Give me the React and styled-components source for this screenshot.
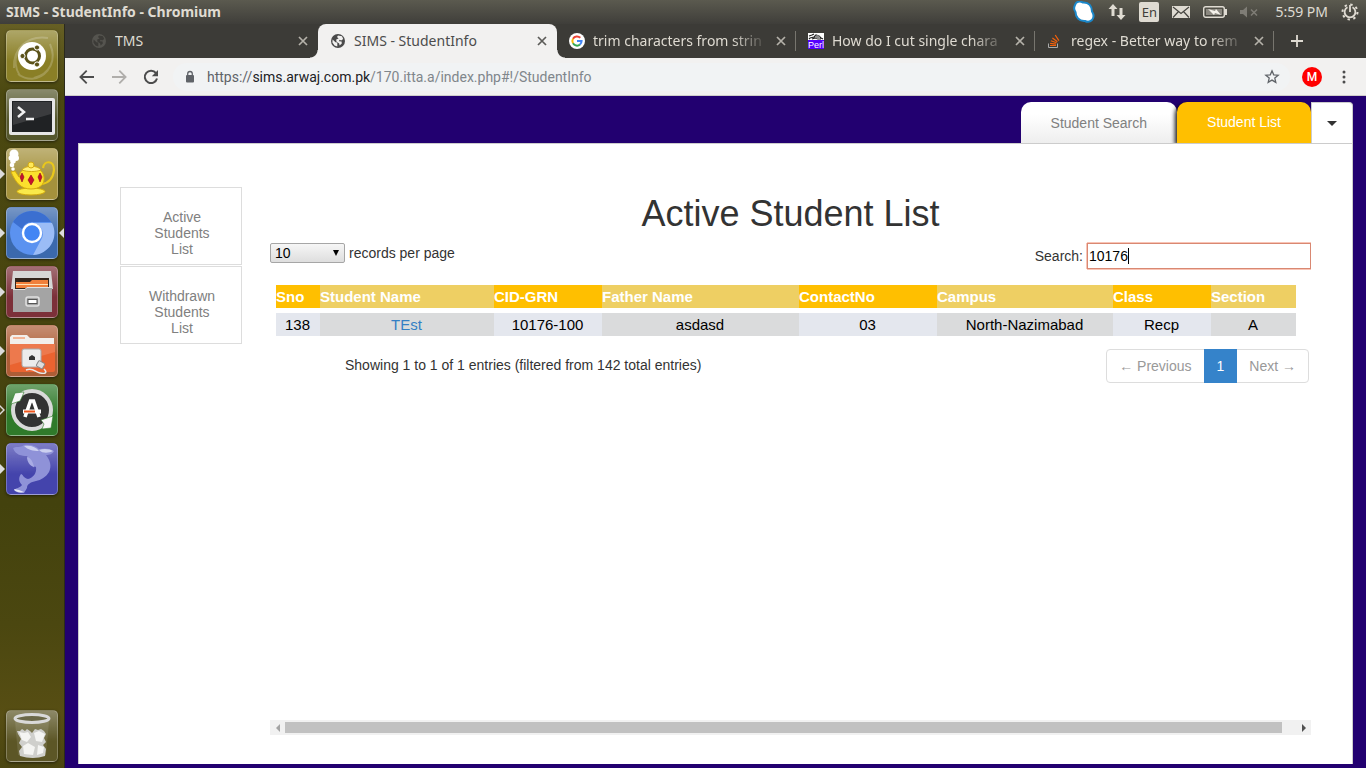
import React from "react";
import styled, { createGlobalStyle, css } from "styled-components";

const UI = '"Noto Sans", "Open Sans", sans-serif';
const SANS = '"Liberation Sans", Arial, sans-serif';

const GlobalStyle = createGlobalStyle`
  *, *::before, *::after { box-sizing: border-box; }
  body { margin: 0; background: #220070; font-family: ${SANS}; font-size: 14px; line-height: 20px; color: #333; }
  button, input, select { font: inherit; color: inherit; margin: 0; }
  svg { display: block; }
`;

/* ---------- desktop frame ---------- */

const Desktop = styled.div`
  min-height: 100vh;
  display: flex;
  flex-direction: column;
`;

const MenuBar = styled.header`
  height: 24px;
  display: flex;
  align-items: center;
  justify-content: space-between;
  padding: 0 7px 0 6px;
  background: linear-gradient(#5b5a4f, #3f3e3a);
  color: #dfdbd2;
  font-family: ${UI};
  font-size: 14px;
`;

const WindowTitle = styled.strong`
  font-size: 14px;
`;

const Indicators = styled.div`
  display: flex;
  align-items: center;
  gap: 13px;
`;

const Lang = styled.span`
  width: 20px;
  height: 20px;
  border-radius: 2px;
  background: #dfdbd2;
  color: #3f3e3a;
  font-size: 13px;
  text-align: center;
`;

const Clock = styled.time`
  padding-left: 4px;
`;

const Workspace = styled.div`
  flex: 1;
  display: flex;
`;

const Launcher = styled.nav`
  width: 65px;
  flex: none;
  display: flex;
  flex-direction: column;
  gap: 7px;
  padding: 6px 6px 6px;
  border-right: 1px solid #2b2a1c;
  background: linear-gradient(#665f24 0, #4b4810 70px, #48450f 300px, #43420d 480px, #4b4710 600px, #574e13 690px, #4a4510 100%);
`;

const Tile = styled.button`
  position: relative;
  width: 52px;
  height: 52px;
  padding: 0;
  border: 1px solid rgba(255, 255, 255, 0.25);
  border-radius: 5px;
  background: linear-gradient(rgba(255, 255, 255, 0.3), rgba(255, 255, 255, 0) 60%), ${(p) => p.$tone};
  box-shadow: 0 1px 3px rgba(0, 0, 0, 0.5);
  ${(p) => p.$last && css`margin-top: auto;`}

  svg { margin: -1px; }
`;

const Pip = styled.i`
  position: absolute;
  top: 20px;
  border: 5px solid transparent;
  ${(p) =>
    p.$side === "right"
      ? css`right: -7px; border-left-width: 0; border-right-color: #dcdcdc;`
      : css`left: -7px; border-right-width: 0; border-left-color: #dcdcdc;`}
  ${(p) =>
    p.$hollow &&
    css`
      &::after {
        content: "";
        position: absolute;
        left: -5px;
        top: -3px;
        border: 3px solid transparent;
        border-right-width: 0;
        border-left-color: #46450f;
      }
    `}
`;

/* ---------- browser chrome ---------- */

const Browser = styled.div`
  flex: 1;
  min-width: 0;
  display: flex;
  flex-direction: column;
`;

const TabStrip = styled.div`
  height: 34px;
  display: flex;
  padding-left: 14px;
  background: #3c3b37;
`;

const BrowserTab = styled.div`
  position: relative;
  flex: 0 1 239px;
  min-width: 0;
  display: flex;
  align-items: center;
  gap: 8px;
  padding: 0 10px 0 12px;
  font-family: ${UI};
  font-size: 14px;
  color: #dfdbd2;

  ${(p) =>
    p.$divided &&
    css`
      &::after {
        content: "";
        position: absolute;
        right: 0;
        top: 7px;
        height: 20px;
        border-right: 1px solid #77756e;
      }
    `}

  ${(p) =>
    p.$active &&
    css`
      background: #f2f1f0;
      color: #4c4c4c;
      border-radius: 8px 8px 0 0;

      &::before,
      &::after {
        content: "";
        position: absolute;
        bottom: 0;
        width: 8px;
        height: 8px;
      }
      &::before {
        left: -8px;
        background: radial-gradient(circle at 0 0, transparent 7px, #f2f1f0 8px);
      }
      &::after {
        right: -8px;
        background: radial-gradient(circle at 100% 0, transparent 7px, #f2f1f0 8px);
      }
    `}
`;

const TabTitle = styled.span`
  flex: 1;
  min-width: 0;
  overflow: hidden;
  white-space: nowrap;
  ${(p) => p.$fade && css`mask-image: linear-gradient(90deg, #000 calc(100% - 36px), transparent);`}
`;

const PlainButton = styled.button`
  display: flex;
  flex: none;
  padding: 0;
  border: 0;
  background: none;
`;

const NewTab = styled(PlainButton)`
  align-items: center;
  margin-left: 17px;
`;

const Toolbar = styled.div`
  height: 38px;
  display: flex;
  align-items: center;
  gap: 16px;
  padding: 0 14px;
  background: #f2f1f0;
  border-bottom: 1px solid #cfcdca;
`;

const Omnibox = styled.div`
  flex: 1;
  height: 28px;
  display: flex;
  align-items: center;
  gap: 11px;
  margin-left: -2px;
  margin-right: -4px;
  padding: 0 10px 0 11px;
  border-radius: 14px;
  background: #f1f3f4;
  font-family: Roboto, ${UI};
  font-size: 14px;
`;

const Address = styled.span`
  flex: 1;
  color: #80868b;
  white-space: nowrap;

  b { font-weight: 400; color: #202124; }
  i { font-style: normal; color: #5f6368; }
`;

const Avatar = styled.span`
  width: 20px;
  height: 20px;
  margin-right: -2px;
  border-radius: 50%;
  background: #f00;
  color: #fff;
  font-family: Roboto, sans-serif;
  font-size: 12px;
  font-weight: 500;
  text-align: center;
`;

/* ---------- page ---------- */

const Page = styled.div`
  flex: 1;
  display: flex;
  flex-direction: column;
  padding: 6px 13px 4px;
  background: #220070;
`;

const PageTabs = styled.nav`
  display: flex;
  justify-content: flex-end;
`;

const PageTab = styled.a`
  height: 41px;
  padding: ${(p) => (p.$active ? "10px" : "11px")} 30px 0;
  border-radius: 10px 10px 0 0;
  text-decoration: none;
  color: ${(p) => (p.$active ? "#fff" : "#808080")};
  background: ${(p) => (p.$active ? "#ffbf00" : "linear-gradient(#fff 30%, #eee)")};
  ${(p) => p.$active && css`box-shadow: -2px 2px 4px rgba(0, 0, 0, 0.9);`}
`;

const TabMenu = styled.button`
  position: relative;
  width: 42px;
  height: 41px;
  display: flex;
  align-items: center;
  justify-content: center;
  padding: 0;
  border: 1px solid #ccc;
  border-bottom: 0;
  border-radius: 0 4px 0 0;
  background: #fff;
`;

const Caret = styled.i`
  border: 5px solid transparent;
  border-top-color: #333;
  border-bottom-width: 0;
`;

const Panel = styled.main`
  position: relative;
  flex: 1;
  display: flex;
  align-items: stretch;
  gap: 28px;
  padding: 43px 41px 29px;
  border: 1px solid #ccc;
  border-bottom: 0;
  background: #fff;
`;

const SideMenu = styled.nav`
  width: 122px;
  flex: none;
  display: flex;
  flex-direction: column;
  gap: 1px;
`;

const SideLink = styled.a`
  padding: 21px 25px 7px 27px;
  border: 1px solid #ddd;
  line-height: 16px;
  text-align: center;
  text-decoration: none;
  color: #808080;
`;

const Content = styled.section`
  flex: 1;
  min-width: 0;
  display: flex;
  flex-direction: column;
`;

const Title = styled.h1`
  margin: 7px 0 8px;
  font-size: 36px;
  font-weight: 400;
  line-height: 40px;
  text-align: center;
`;

const Controls = styled.div`
  display: flex;
  justify-content: space-between;
  align-items: flex-start;
  padding: 1px 0 11px;
`;

const Field = styled.label`
  display: flex;
  align-items: center;
  gap: 4px;
`;

const SelectBox = styled.span`
  position: relative;
  width: 75px;
  height: 20px;

  svg {
    position: absolute;
    right: 6px;
    top: 7px;
    pointer-events: none;
  }
`;

const Select = styled.select`
  appearance: none;
  display: block;
  width: 100%;
  height: 20px;
  padding: 0 4px;
  border: 1px solid #a6a6a6;
  border-radius: 2px;
  background: linear-gradient(#f6f6f6, #dedede);
  line-height: 18px;
  color: #000;
`;

const SearchBox = styled.span`
  position: relative;

  &::after {
    content: "";
    position: absolute;
    left: 41px;
    top: 5px;
    height: 16px;
    border-left: 1px solid #000;
  }
`;

const SearchInput = styled.input`
  display: block;
  width: 224px;
  height: 26px;
  padding: 1px;
  border: 1px solid #d98872;
  border-radius: 0;
  outline: 0;
  color: #000;
  caret-color: transparent;
  box-shadow: -1px 0 #f8c4b6, 0 -1px #f8c4b6, 0 1px #f8c4b6;
`;

const TableWrap = styled.div`
  padding: 0 15px 0 6px;
`;

const Table = styled.table`
  width: 100%;
  table-layout: fixed;
  border-collapse: separate;
  border-spacing: 0 5px;
  font-size: 15px;
  line-height: 21px;
`;

const Th = styled.th`
  padding: 1px 0;
  text-align: left;
  color: #fff;
  background: ${(p) => (p.$alt ? "#eecf63" : "#ffbf00")};
`;

const Td = styled.td`
  padding: 1px 1px 1px 0;
  text-align: center;
  color: #000;
  background: ${(p) => (p.$alt ? "#dadbdc" : "#e4e7ee")};

  a { color: #337fc4; text-decoration: none; }
`;

const Footer = styled.div`
  display: flex;
  justify-content: space-between;
  align-items: flex-start;
  padding: 8px 2px 0 75px;
`;

const Info = styled.p`
  margin: 6px 0 0;
`;

const Pager = styled.nav`
  display: flex;
`;

const PageButton = styled.button`
  position: relative;
  z-index: ${(p) => (p.$current ? 1 : 0)};
  height: 34px;
  padding: 0 12px;
  margin-left: -1px;
  border: 1px solid ${(p) => (p.$current ? "#3583ca" : "#ddd")};
  background: ${(p) => (p.$current ? "#3583ca" : "#fff")};
  color: ${(p) => (p.$current ? "#fff" : "#999")};

  &:first-child { border-radius: 4px 0 0 4px; }
  &:last-child { border-radius: 0 4px 4px 0; }
`;

const ScrollBar = styled.div`
  height: 15px;
  display: flex;
  align-items: center;
  margin-top: auto;
  background: #f1f1f1;
`;

const ScrollStep = styled.button`
  width: 15px;
  height: 15px;
  display: flex;
  align-items: center;
  justify-content: center;
  padding: 0;
  border: 0;
  background: none;

  &::before {
    content: "";
    border: 4px solid transparent;
    ${(p) =>
      p.$end
        ? css`border-right-width: 0; border-left-color: #505050;`
        : css`border-left-width: 0; border-right-color: #a3a3a3;`}
  }
`;

const ScrollTrack = styled.div`
  flex: 1;
  padding-right: 14px;

  &::before {
    content: "";
    display: block;
    height: 11px;
    background: #c1c1c1;
  }
`;

/* ---------- icons ---------- */

const Close = ({ color = "#b5b2aa" }) => (
  <svg width="10" height="10" viewBox="0 0 10 10" stroke={color} strokeWidth="1.7">
    <path d="M1 1l8 8M9 1L1 9" />
  </svg>
);

const Globe = ({ color, ink }) => (
  <svg width="16" height="16" viewBox="0 0 16 16">
    <circle cx="8" cy="8" r="7" fill={color} />
    <path d="M2.6 6.5L5.5 9.2 7.3 9.4 7.3 13.6 4.5 12.4 2.4 9.4zM8 2.4L12 3.2 13.2 6 11.2 7.4 9.6 6.8 8.8 8.2 11.6 8.6 11.8 10.4 9.6 12.6 9.2 10.4 6.4 8.4 6.2 6.6 8.6 5.6 7 4z" fill={ink} />
  </svg>
);

const Google = () => (
  <svg width="16" height="16" viewBox="0 0 16 16" fill="none" strokeWidth="2">
    <circle cx="8" cy="8" r="8" fill="#fff" />
    <path d="M4 5.7A4.6 4.6 0 0 1 11.3 4.8" stroke="#ea4335" />
    <path d="M4 5.7A4.6 4.6 0 0 0 4 10.3" stroke="#fbbc05" />
    <path d="M4 10.3A4.6 4.6 0 0 0 11 11.5" stroke="#34a853" />
    <path d="M8 8.1H12.6A4.6 4.6 0 0 1 11 11.5" stroke="#4285f4" />
  </svg>
);

const Perl = () => (
  <svg width="16" height="16" viewBox="0 0 16 16">
    <path fill="#fff" d="M0 0h16v8H0z" />
    <path fill="#50f" d="M0 7h16v9H0z" />
    <path d="M1 3l3-1 2-1M2 5l4-1 2-2 3 1 2 2 2 1M4 6l3-1 3 1h3M1 6l1-1" stroke="#222" fill="none" strokeWidth="1.2" />
    <path d="M7 3l3-1 2 2-2 2-3-1z" fill="#8a8a8a" />
    <text x="0" y="15" fill="#fff" fontFamily="Liberation Sans" fontSize="9">Perl</text>
  </svg>
);

const Stack = () => (
  <svg width="16" height="16" viewBox="0 0 16 16" fill="none">
    <path d="M1.5 10.5v4h9v-4" stroke="#aaa" />
    <path d="M3 12.500h6M3.100 10.400l6 .8M3.800 7.800l5.800 2M5.400 5l5 3.800M8.200 2l3.700 5.700" stroke="#f4610b" strokeWidth="1.200" />
  </svg>
);

const Plus = () => (
  <svg width="12" height="12" viewBox="0 0 12 12" stroke="#dfdbd2" strokeWidth="1.8">
    <path d="M6 0v12M0 6h12" />
  </svg>
);

const Back = ({ color = "#4c4c4c", flip }) => (
  <svg width="16" height="16" viewBox="0 0 16 16" fill="none" stroke={color} strokeWidth="1.8">
    <path d={flip ? "M1 8h13M8.3 1.7L14.6 8l-6.3 6.3" : "M15 8H2M7.7 1.7L1.4 8l6.3 6.3"} />
  </svg>
);

const Reload = () => (
  <svg width="16" height="16" viewBox="0 0 16 16" fill="none" stroke="#4c4c4c" strokeWidth="2">
    <path d="M13 4.2A6.2 6.2 0 1 0 14 9.5" />
    <path d="M15 1v6.3H8.8z" fill="#4c4c4c" stroke="none" />
  </svg>
);

const Lock = () => (
  <svg width="12" height="14" viewBox="0 0 12 14">
    <rect x="2" y="5" width="8" height="7.5" rx="1" fill="#5f6368" />
    <path d="M3.7 5.5V3.8a2.3 2.3 0 0 1 4.6 0v1.7" fill="none" stroke="#5f6368" strokeWidth="1.3" />
  </svg>
);

const Star = () => (
  <svg width="16" height="16" viewBox="0 0 16 16" fill="none" stroke="#5f6368" strokeWidth="1.3">
    <path d="M8 1.800l1.700 4 4.500.4-3.400 2.900 1 4.300L8 11.100l-3.800 2.300 1-4.300L1.800 6.200l4.500-.4z" />
  </svg>
);

const Dots = () => (
  <svg width="16" height="16" viewBox="0 0 16 16" fill="#4c4c4c">
    <circle cx="8" cy="3" r="1.5" />
    <circle cx="8" cy="8" r="1.5" />
    <circle cx="8" cy="13" r="1.5" />
  </svg>
);

const Skype = () => (
  <svg width="22" height="22" viewBox="0 0 22 22">
    <path d="M2 4C3 0 7 0 10 1.500c6-.5 9 4 9 9 2 3 2 6 0 8.500-2 2-5 2-7 1-6 .5-9.500-4-9.500-9C.5 8.500 1 6 2 4z" fill="#fff" stroke="#1b87c9" strokeWidth="2" />
  </svg>
);

const Network = () => (
  <svg width="18" height="18" viewBox="0 0 18 18" fill="#dfdbd2">
    <path d="M5 1L9.500 6H6.500v7h-3V6H.5zM13 17l4.500-5h-3V5h-3v7h-3z" />
  </svg>
);

const Mail = () => (
  <svg width="18" height="14" viewBox="0 0 18 14">
    <rect y="1" width="18" height="12" fill="#dfdbd2" />
    <path d="M1 2l8 6.500L17 2M1 12.500l5.500-6M17 12.500l-5.500-6" fill="none" stroke="#45443f" strokeWidth="1.2" />
  </svg>
);

const Battery = () => (
  <svg width="24" height="14" viewBox="0 0 24 14">
    <rect x=".7" y="1.700" width="20.600" height="10.600" rx="2" fill="none" stroke="#dfdbd2" strokeWidth="1.4" />
    <rect x="3" y="4" width="16" height="6" fill="#8b8880" />
    <rect x="22" y="4" width="2" height="6" fill="#dfdbd2" />
    <path d="M5 4l7 2 1-2 5 6-6-2-1 2z" fill="#f4f1ea" />
  </svg>
);

const Mute = () => (
  <svg width="18" height="12" viewBox="0 0 18 12">
    <path d="M0 4h3l4-3.500v11L3 8H0z" fill="#7f7d76" />
    <path d="M11 3.500l6 6M17 3.500l-6 6" stroke="#7f7d76" strokeWidth="1.500" />
  </svg>
);

const Gear = () => (
  <svg width="18" height="18" viewBox="0 0 18 18" fill="none" stroke="#dfdbd2">
    <circle cx="9" cy="9" r="7.500" strokeWidth="2" strokeDasharray="2.400 3.490" />
    <path d="M6.500 4.200a5.400 5.400 0 1 0 5 0" strokeWidth="1.800" />
    <path d="M9 2v7" strokeWidth="1.800" />
  </svg>
);

const Drawing = ({ children }) => (
  <svg width="52" height="52" viewBox="0 0 52 52">
    {children}
  </svg>
);

const Dash = () => (
  <Drawing>
    <path d="M8 38C7 18 22 5 42 8M14 46C4 30 12 12 30 8M44 14c7 16 0 30-16 34M42 40C32 52 20 50 12 44" fill="none" stroke="#fff" strokeOpacity=".2" strokeWidth="2" />
    <circle cx="26" cy="26" r="14" fill="#fff" />
    <circle cx="26.500" cy="26" r="7" fill="none" stroke="#5b5219" strokeWidth="3" />
    <g fill="#5b5219" stroke="#fff" strokeWidth="1">
      <circle cx="16.500" cy="26" r="2.600" />
      <circle cx="31" cy="17.500" r="2.600" />
      <circle cx="31" cy="34.500" r="2.600" />
    </g>
  </Drawing>
);

const Terminal = () => (
  <Drawing>
    <rect x="3" y="9" width="46" height="37" rx="2" fill="#e6e6e6" />
    <rect x="6" y="12" width="40" height="31" fill="#202224" />
    <path d="M7 13h38v12L7 36z" fill="#fff" fillOpacity=".12" />
    <path d="M12 18l6 5-6 5" fill="none" stroke="#f2f2f2" strokeWidth="2.500" />
    <path d="M20 30h8" stroke="#f2f2f2" strokeWidth="2.500" />
  </Drawing>
);

const Teapot = () => (
  <Drawing>
    <path d="M37 20c1-8 11-8 11 2-1 9-6 13-12 14" fill="none" stroke="#e9c71c" strokeWidth="2.200" />
    <ellipse cx="25" cy="43.500" rx="14" ry="3.500" fill="#fae94a" stroke="#d2a90c" />
    <path d="M5 24l4-1 4 6c1-7 5-9 12-9s12 2 13 9c1 8-5 12-13 12-10 0-15-6-20-17z" fill="#fbe02d" stroke="#d5ab10" />
    <path d="M16 22c3-5 16-5 19 0-5 2-14 2-19 0z" fill="#fff07a" stroke="#d5ab10" />
    <circle cx="25" cy="17" r="3" fill="#ffe957" stroke="#d5ab10" />
    <path d="M16 25l2 4-2 5-2-5zM25 27l3 5-3 5-3-5zM34 25l2 4-2 5-2-5z" fill="#c8102e" stroke="#8d0b1e" strokeWidth=".6" />
    <g fill="#fff">
      <circle cx="8" cy="6" r="4.500" />
      <circle cx="5" cy="10" r="2.500" />
      <circle cx="10" cy="10" r="3" />
      <circle cx="7" cy="13" r="2.800" />
      <circle cx="6" cy="17" r="2.300" />
      <circle cx="7" cy="21" r="1.800" />
    </g>
  </Drawing>
);

const Chromium = () => (
  <Drawing>
    <circle cx="26" cy="26" r="22" fill="#5b92f0" />
    <path d="M7 15A22 22 0 0 1 45 15H26a11 11 0 0 0-10 7z" fill="#3b6fd0" />
    <path d="M26 16h20a22 22 0 0 1-19 32l8-15a11 11 0 0 0-9-17z" fill="#9bbcf6" />
    <circle cx="26" cy="26" r="9" fill="#4285f4" stroke="#fff" strokeWidth="2.400" />
  </Drawing>
);

const Cabinet = () => (
  <Drawing>
    <path d="M7 5h38l2 18H5z" fill="#d6d6d6" />
    <path d="M9 12h34v12H9z" fill="#33241c" />
    <path d="M10 16h14l2-2h16v8H10z" fill="#f0803c" />
    <path d="M10 18.500h32" stroke="#ffe3b8" />
    <path d="M7 23h12l2-2h25v25H7z" fill="#a4a4a4" />
    <path d="M7 23.500h12l2-2h25" fill="none" stroke="#e2e2e2" />
    <rect x="20" y="31" width="13" height="9" rx="2" fill="#a4a4a4" stroke="#e0e0e0" strokeWidth="1.500" />
    <rect x="22" y="33.500" width="9" height="4" fill="#fff" stroke="#555" />
  </Drawing>
);

const NetFolder = () => (
  <Drawing>
    <path d="M4 12l2-2h15l3 3h24v12H4z" fill="#f2efec" />
    <path d="M7 13h12" stroke="#f3a27b" strokeWidth="1.500" />
    <path d="M4 19h45v26q0 2-2 2H6q-2 0-2-2z" fill="#ea6330" />
    <path d="M4 19h45v8L4 40z" fill="#fff" fillOpacity=".14" />
    <rect x="16" y="24" width="19" height="18" rx="2" fill="#ececec" stroke="#aaa" />
    <path d="M23 35v-3l3-2 3 2v3z" fill="#333" />
    <path d="M20 45c7-3 9 2 14 3s8 0 4-4" fill="none" stroke="#e8e8e8" strokeWidth="1.500" />
    <rect x="31" y="37" width="7" height="6" rx="1" fill="#ddd" stroke="#888" transform="rotate(30 35 40)" />
  </Drawing>
);

const Updater = () => (
  <Drawing>
    <circle cx="26" cy="26" r="19" fill="#333" stroke="#d9d9d9" strokeWidth="4" />
    <path d="M5 20L9 9l9-1-2 5-2 4zM47 32l-2 12-9 1 2-5-3-4z" fill="#f7f7f7" stroke="#2f7a2a" strokeWidth=".6" />
    <path d="M19 33l5.500-16h3L33 33" fill="none" stroke="#fff" strokeWidth="3.600" />
    <path d="M17 27.500h18" stroke="#fff" strokeWidth="4" />
    <path d="M18 27.500h11" stroke="#f0561d" strokeWidth="2" />
  </Drawing>
);

const Dolphin = () => (
  <Drawing>
    <path d="M7 5c4-2 7 0 11-3 7-1 12 1 15 4 5-1 11-1 15 2-1 3-5 4-8 4 4 5 6 11 3 17-3 5-8 8-13 9-5 1-9 3-9 7l-3 5c-5 0-9-1-10-3 2-2 6-2 8-5-3-3-4-7-1-11 2 0 2 4 7 5 5-1 9-6 8-12-2-2-2 2-3-1-3-3-4-7-6-10-5 0-12-1-14-8z" fill="#8f92d8" />
    <path d="M18 3c7-1 12 1 15 5-6 0-11-1-15-5zM33 7c5-2 11-1 14 1-4 2-10 3-14-1z" fill="#ccd0f0" />
    <path d="M8 46l5 1 5 2c-4 1-9 0-10-3z" fill="#e4e6f6" />
    <path d="M21 14c4 1 6 5 7 10-4-1-7-5-7-10z" fill="#a9ace4" />
  </Drawing>
);

const Trash = () => (
  <Drawing>
    <path d="M9 11l3 34q14 5 28 0l3-34z" fill="#fff" fillOpacity=".1" />
    <path d="M11 21l3 0 2-2 3 2 2-2 3 2 2 2 3-4 3 1 3-1 3 2 2 3-2 4 2 4-3 3 3 4-1 7q-12 4-25 0l-1-5 3-4-3-4 2-4-3-5z" fill="#cfcfcc" />
    <path d="M13 22l5 1 4-1 3 5-4 5-5-2zM28 23l5-2 6 3-3 8-6-1zM17 36l5-3 7 4-2 8-9-1zM32 35l6 2-1 6-6 2z" fill="#f4f4f2" />
    <ellipse cx="26" cy="8.500" rx="17" ry="4" fill="#6b6848" stroke="#d9d9d9" strokeWidth="3" />
  </Drawing>
);

const SelectArrow = () => (
  <svg width="6" height="6" viewBox="0 0 6 6">
    <path d="M0 0h6L3 6z" fill="#000" />
  </svg>
);

/* ---------- data ---------- */

const apps = [
  { name: "Search your computer", tone: "#8a7f26", art: <Dash /> },
  { name: "Terminal", tone: "#55572c", art: <Terminal /> },
  { name: "Teapot", tone: "#a4913c", art: <Teapot />, running: true },
  { name: "Chromium", tone: "#3b69ad", art: <Chromium />, running: true, focused: true },
  { name: "Files", tone: "#7c3039", art: <Cabinet />, running: true },
  { name: "Network", tone: "#ad5d36", art: <NetFolder />, running: true },
  { name: "Software Updater", tone: "#2f7a2a", art: <Updater />, running: true, hollow: true },
  { name: "MySQL Workbench", tone: "#4444ac", art: <Dolphin />, running: true },
];

const browserTabs = [
  { title: "TMS", icon: <Globe color="#55544f" ink="#3c3b37" /> },
  { title: "SIMS - StudentInfo", icon: <Globe color="#4a4a4a" ink="#f2f1f0" />, active: true },
  { title: "trim characters from strin", icon: <Google />, divided: true },
  { title: "How do I cut single chara", icon: <Perl />, divided: true },
  { title: "regex - Better way to rem", icon: <Stack />, divided: true },
];

const columns = [
  { label: "Sno", width: 44 },
  { label: "Student Name", width: 174 },
  { label: "CID-GRN", width: 108 },
  { label: "Father Name", width: 197 },
  { label: "ContactNo", width: 138 },
  { label: "Campus", width: 176 },
  { label: "Class", width: 98 },
  { label: "Section", width: 85 },
];

const student = ["138", <a href="#student">TEst</a>, "10176-100", "asdasd", "03", "North-Nazimabad", "Recp", "A"];

export default function App() {
  return (
    <Desktop>
      <GlobalStyle />
      <MenuBar>
        <WindowTitle>SIMS - StudentInfo - Chromium</WindowTitle>
        <Indicators>
          <Skype />
          <Network />
          <Lang>En</Lang>
          <Mail />
          <Battery />
          <Mute />
          <Clock>5:59 PM</Clock>
          <Gear />
        </Indicators>
      </MenuBar>
      <Workspace>
        <Launcher aria-label="Launcher">
          {apps.map((a) => (
            <Tile key={a.name} aria-label={a.name} $tone={a.tone}>
              {a.art}
              {a.running && <Pip $hollow={a.hollow} />}
              {a.focused && <Pip $side="right" />}
            </Tile>
          ))}
          <Tile aria-label="Trash" $tone="#5c5626" $last>
            <Trash />
          </Tile>
        </Launcher>
        <Browser>
          <TabStrip>
            {browserTabs.map((t) => (
              <BrowserTab key={t.title} $active={t.active} $divided={t.divided}>
                {t.icon}
                <TabTitle $fade={t.divided}>{t.title}</TabTitle>
                <PlainButton aria-label="Close tab">
                  <Close color={t.active ? "#5c5b58" : undefined} />
                </PlainButton>
              </BrowserTab>
            ))}
            <NewTab aria-label="New tab">
              <Plus />
            </NewTab>
          </TabStrip>
          <Toolbar>
            <PlainButton aria-label="Back"><Back /></PlainButton>
            <PlainButton aria-label="Forward"><Back flip color="#b0aeab" /></PlainButton>
            <PlainButton aria-label="Reload"><Reload /></PlainButton>
            <Omnibox>
              <Lock />
              <Address>
                <i>https://</i><b>sims.arwaj.com.pk</b>/170.itta.a/index.php#!/StudentInfo
              </Address>
              <PlainButton aria-label="Bookmark"><Star /></PlainButton>
            </Omnibox>
            <Avatar>M</Avatar>
            <PlainButton aria-label="Menu"><Dots /></PlainButton>
          </Toolbar>
          <Page>
            <PageTabs>
              <PageTab href="#search">Student Search</PageTab>
              <PageTab href="#list" $active>Student List</PageTab>
              <TabMenu aria-label="More"><Caret /></TabMenu>
            </PageTabs>
            <Panel>
              <SideMenu>
                <SideLink href="#active">Active Students List</SideLink>
                <SideLink href="#withdrawn">Withdrawn Students List</SideLink>
              </SideMenu>
              <Content>
                <Title>Active Student List</Title>
                <Controls>
                  <Field>
                    <SelectBox>
                      <Select defaultValue="10">
                        <option>10</option>
                        <option>25</option>
                        <option>50</option>
                      </Select>
                      <SelectArrow />
                    </SelectBox>
                    records per page
                  </Field>
                  <Field>
                    Search:
                    <SearchBox>
                      <SearchInput type="text" defaultValue="10176" />
                    </SearchBox>
                  </Field>
                </Controls>
                <TableWrap>
                  <Table>
                    <colgroup>
                      {columns.map((c) => (
                        <col key={c.label} width={c.width} />
                      ))}
                    </colgroup>
                    <thead>
                      <tr>
                        {columns.map((c, i) => (
                          <Th key={c.label} $alt={i % 2 === 1}>{c.label}</Th>
                        ))}
                      </tr>
                    </thead>
                    <tbody>
                      <tr>
                        {student.map((v, i) => (
                          <Td key={i} $alt={i % 2 === 1}>{v}</Td>
                        ))}
                      </tr>
                    </tbody>
                  </Table>
                </TableWrap>
                <Footer>
                  <Info>Showing 1 to 1 of 1 entries (filtered from 142 total entries)</Info>
                  <Pager>
                    <PageButton>← Previous</PageButton>
                    <PageButton $current>1</PageButton>
                    <PageButton>Next →</PageButton>
                  </Pager>
                </Footer>
                <ScrollBar>
                  <ScrollStep aria-label="Scroll left" />
                  <ScrollTrack />
                  <ScrollStep aria-label="Scroll right" $end />
                </ScrollBar>
              </Content>
            </Panel>
          </Page>
        </Browser>
      </Workspace>
    </Desktop>
  );
}
